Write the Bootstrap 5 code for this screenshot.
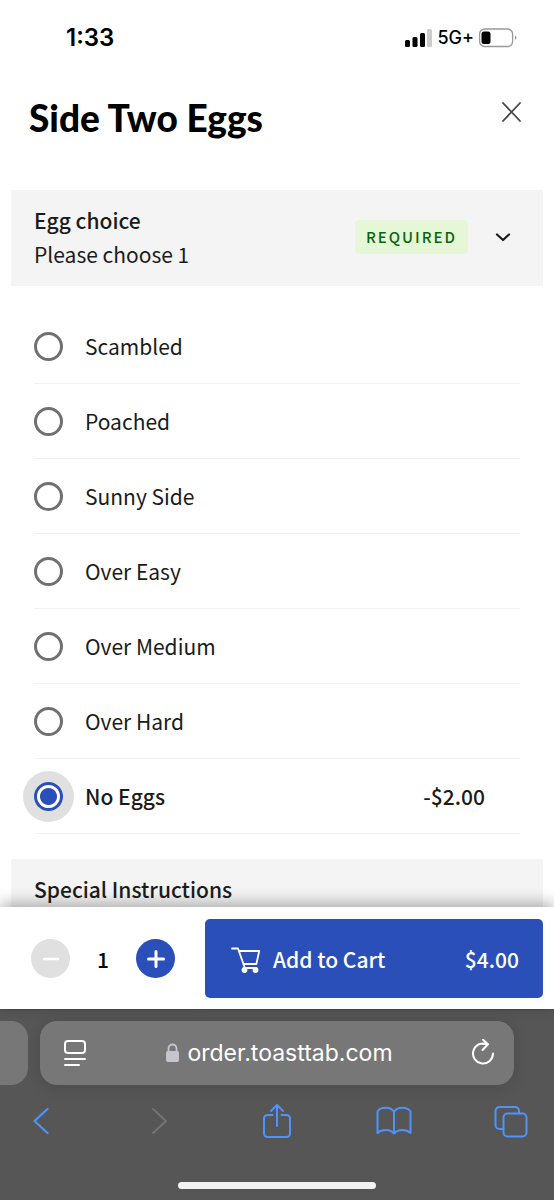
<!DOCTYPE html>
<html lang="en">
<head>
<meta charset="utf-8">
<meta name="viewport" content="width=device-width, initial-scale=1">
<title>Side Two Eggs</title>
<link href="https://cdn.jsdelivr.net/npm/bootstrap@5.3.0/dist/css/bootstrap.min.css" rel="stylesheet">
<style>
  :root { --brand: #2b4fb9; --ink: #1b1b1b; }
  body { font-family: "Noto Sans CJK JP", "Noto Sans", sans-serif; font-size: 21px; line-height: 34px; color: var(--ink); background: #fff; }
  svg { display: block; fill: none; stroke: currentColor; stroke-linecap: round; stroke-linejoin: round; }
  .plain-btn { border: 0; background: none; padding: 0; color: inherit; }
  .status-bar { height: 75px; padding: 0 37px 0 66px; font-family: Inter, sans-serif; color: #000; }
  .status-time { font-size: 24px; font-weight: 600; }
  .status-net { font-size: 18px; font-weight: 500; }
  .title-row { height: 115px; padding: 0 32px 29px 29px; }
  .item-title { font-family: Lato, sans-serif; font-weight: 900; font-size: 37px; line-height: 44px; color: #000; }
  .close-btn { color: #444; margin-bottom: 13px; }
  .group-head { background: #f4f4f4; margin: 0 11px; padding: 13px 31px 15px 23px; }
  .group-name { font-size: 21px; line-height: 34px; font-weight: 500; }
  .required-tag { background: #e5f7d6; color: #0a640c; font-size: 15px; line-height: 34px; font-weight: 500; letter-spacing: 2px; border-radius: 4px; padding: 0 11px; margin-right: 26px; }
  .option-list { padding: 23px 34px 25px; }
  .option-row { height: 75px; border-bottom: 1px solid #f2f2f2; padding-right: 35px; cursor: pointer; }
  .option-row.chosen { font-weight: 500; }
  .option-radio { appearance: none; width: 29px; height: 29px; border: 3px solid #707070; border-radius: 50%; margin: 0 22px 0 0; background: #fff; }
  .option-radio:checked { border-color: var(--brand); background: radial-gradient(circle, var(--brand) 8px, #fff 9px); box-shadow: 0 0 0 11px #e0e0e0; }
  .cart-bar { box-shadow: 0 -4px 14px rgba(0,0,0,.3); padding: 12px 11px 11px 31px; gap: 30px; z-index: 1; }
  .step-btn { width: 39px; height: 39px; border-radius: 50%; background: var(--brand); color: #fff; }
  .step-btn:disabled { background: #e0e0e0; }
  .cart-count { width: 66px; font-weight: 500; color: #000; }
  .cart-btn { height: 79px; border-radius: 5px; background: var(--brand); color: #fff; font-weight: 500; padding: 0 24px 0 26px; gap: 12px; }
  .browser-bar { background: #565656; border-top: 1px solid #4a4a4a; padding-top: 11px; height: 191px; }
  .tab-peek { width: 28px; height: 64px; background: #777; border-radius: 0 17px 17px 0; }
  .address { height: 64px; background: #777; border-radius: 17px; margin: 0 40px 0 12px; padding: 0 19px 0 23px; color: #fff; box-shadow: 0 2px 14px rgba(0,0,0,.13); }
  .address-link { font-family: Inter, sans-serif; font-size: 23px; color: #fff; gap: 7px; }
  .tool-row { height: 72px; padding: 0 25px 0 24px; color: #4f93f8; }
  .tool-row .plain-btn { width: 36px; }
  .home-line { width: 198px; height: 7px; border-radius: 4px; background: #f2f2f2; margin-top: 25px; }
</style>
</head>
<body>
<div class="vh-100 d-flex flex-column overflow-hidden">
  <header class="status-bar d-flex align-items-center flex-shrink-0">
    <span class="status-time">1:33</span>
    <span class="d-flex align-items-center ms-auto gap-1">
      <svg width="28" height="20" viewBox="0 0 28 20" style="stroke:none;fill:#000"><rect y="12" width="5" height="7" rx="1.500"/><rect x="7.500" y="9" width="5" height="10" rx="1.500"/><rect x="15" y="5" width="5" height="14" rx="1.500"/><rect x="22" y="1" width="5" height="18" rx="1.500" fill="#ccc"/></svg>
      <span class="status-net">5G+</span>
      <svg width="39" height="20" viewBox="0 0 39 20"><rect x="1.600" y="1" width="33" height="17.500" rx="5" stroke="#999" stroke-width="1.300"/><rect x="3.500" y="3.500" width="9" height="12.500" rx="2.500" fill="#000" stroke="none"/><path d="M37 7.500v4.500q1.500-.8 1.500-2.250T37 7.500z" fill="#999" stroke="none"/></svg>
    </span>
  </header>

  <main class="flex-grow-1 overflow-hidden">
    <div class="title-row d-flex align-items-center justify-content-between">
      <h1 class="item-title mb-0">Side Two Eggs</h1>
      <button class="plain-btn close-btn" type="button" aria-label="Close"><svg width="22" height="22" viewBox="0 0 22 22" stroke-width="1.800"><path d="M3 2l17 18M20 2L3 20"/></svg></button>
    </div>

    <section>
      <div class="group-head d-flex align-items-center">
        <div class="me-auto">
          <h2 class="group-name mb-0">Egg choice</h2>
          <div>Please choose 1</div>
        </div>
        <span class="required-tag">REQUIRED</span>
        <button class="plain-btn" type="button" aria-label="Collapse Egg choice"><svg width="18" height="18" viewBox="0 0 18 18" stroke-width="2.200"><path d="M3 6.500l6 5.500 6-5.500"/></svg></button>
      </div>
      <div class="option-list">
        <label class="option-row d-flex align-items-center"><input class="option-radio" type="radio" name="egg">Scambled</label>
        <label class="option-row d-flex align-items-center"><input class="option-radio" type="radio" name="egg">Poached</label>
        <label class="option-row d-flex align-items-center"><input class="option-radio" type="radio" name="egg">Sunny Side</label>
        <label class="option-row d-flex align-items-center"><input class="option-radio" type="radio" name="egg">Over Easy</label>
        <label class="option-row d-flex align-items-center"><input class="option-radio" type="radio" name="egg">Over Medium</label>
        <label class="option-row d-flex align-items-center"><input class="option-radio" type="radio" name="egg">Over Hard</label>
        <label class="option-row chosen d-flex align-items-center"><input class="option-radio" type="radio" name="egg" checked>No Eggs<span class="ms-auto">-$2.00</span></label>
      </div>
    </section>

    <section>
      <div class="group-head"><h2 class="group-name mb-0">Special Instructions</h2></div>
    </section>
  </main>

  <div class="cart-bar bg-white d-flex align-items-center flex-shrink-0 position-relative">
    <div class="d-flex align-items-center">
      <button class="plain-btn step-btn d-flex align-items-center justify-content-center" type="button" aria-label="Decrease quantity" disabled><svg width="20" height="20" viewBox="0 0 20 20" stroke-width="2.500"><path d="M3 10h14"/></svg></button>
      <span class="cart-count text-center">1</span>
      <button class="plain-btn step-btn d-flex align-items-center justify-content-center" type="button" aria-label="Increase quantity"><svg width="20" height="20" viewBox="0 0 20 20" stroke-width="3"><path d="M2.500 10h15M10 2.500v15"/></svg></button>
    </div>
    <button class="plain-btn cart-btn d-flex align-items-center flex-grow-1" type="button">
      <svg width="30" height="28" viewBox="0 0 30 28" stroke-width="1.800"><path d="M1 3.500h6l6.500 18.500M8.200 6h20l-2.800 13H12.300M13 23h12"/><circle cx="13.500" cy="25" r="2" fill="currentColor"/><circle cx="24.500" cy="25" r="2" fill="currentColor"/></svg>
      <span>Add to Cart</span><span class="ms-auto">$4.00</span>
    </button>
  </div>

  <footer class="browser-bar flex-shrink-0">
    <div class="d-flex">
      <div class="tab-peek"></div>
      <div class="address d-flex align-items-center justify-content-between flex-grow-1">
        <button class="plain-btn" type="button" aria-label="Page settings"><svg width="24" height="28" viewBox="0 0 24 28" stroke-width="2"><rect x="2" y="2" width="20" height="12" rx="3"/><path d="M2 20h20M2 26h14"/></svg></button>
        <a class="address-link d-flex align-items-center text-decoration-none" href="#"><svg width="15" height="20" viewBox="0 0 15 20"><rect x="1" y="8" width="13" height="11" rx="2" fill="#c6c4cc" stroke="none"/><path d="M3.500 9V5.500a4 4 0 0 1 8 0V9" stroke="#c6c4cc" stroke-width="1.800"/></svg>order.toasttab.com</a>
        <button class="plain-btn" type="button" aria-label="Reload"><svg width="24" height="28" viewBox="0 0 24 28" stroke-width="2"><path d="M15.500 5.200A10 10 0 1 0 22 14.500M11.500 5h5.500M12 0.800l5 4.400-5.500 5.800"/></svg></button>
      </div>
    </div>
    <nav class="tool-row d-flex align-items-center justify-content-between">
      <button class="plain-btn" type="button" aria-label="Back"><svg class="mx-auto" width="30" height="32" viewBox="0 0 30 32" stroke-width="2.200"><path d="M20.500 4L7.500 16l13 12"/></svg></button>
      <button class="plain-btn" type="button" aria-label="Forward" disabled><svg class="mx-auto" width="30" height="32" viewBox="0 0 30 32" stroke-width="2" style="color:#747474"><path d="M9 4l13 12L9 28"/></svg></button>
      <button class="plain-btn" type="button" aria-label="Share"><svg class="mx-auto" width="30" height="36" viewBox="0 0 30 36" stroke-width="2"><path d="M10.500 12H5.500a3.500 3.500 0 0 0-3.500 3.500v15a3.500 3.500 0 0 0 3.500 3.500h19a3.500 3.500 0 0 0 3.500-3.500v-15a3.500 3.500 0 0 0-3.500-3.500h-5M15 23V2.500M9 8l6-6 6 6"/></svg></button>
      <button class="plain-btn" type="button" aria-label="Bookmarks"><svg width="36" height="32" viewBox="0 0 36 32" stroke-width="2"><path d="M18 7v21.500C14 24 6 24 1.500 28V6.500C5 1.500 15 1.500 18 7c3-5.500 13-5.500 16.500-.5V28C30 24 22 24 18 28.500"/></svg></button>
      <button class="plain-btn" type="button" aria-label="Tabs"><svg class="mx-auto" width="34" height="34" viewBox="0 0 34 34" stroke-width="2"><rect x="9.500" y="9.500" width="23" height="23" rx="4"/><path d="M9 25H5.500a4 4 0 0 1-4-4V7a4 4 0 0 1 4-4h15.500a4 4 0 0 1 4 4v2"/></svg></button>
    </nav>
    <div class="home-line mx-auto"></div>
  </footer>
</div>
<script src="https://cdn.jsdelivr.net/npm/bootstrap@5.3.0/dist/js/bootstrap.bundle.min.js"></script>
</body>
</html>
